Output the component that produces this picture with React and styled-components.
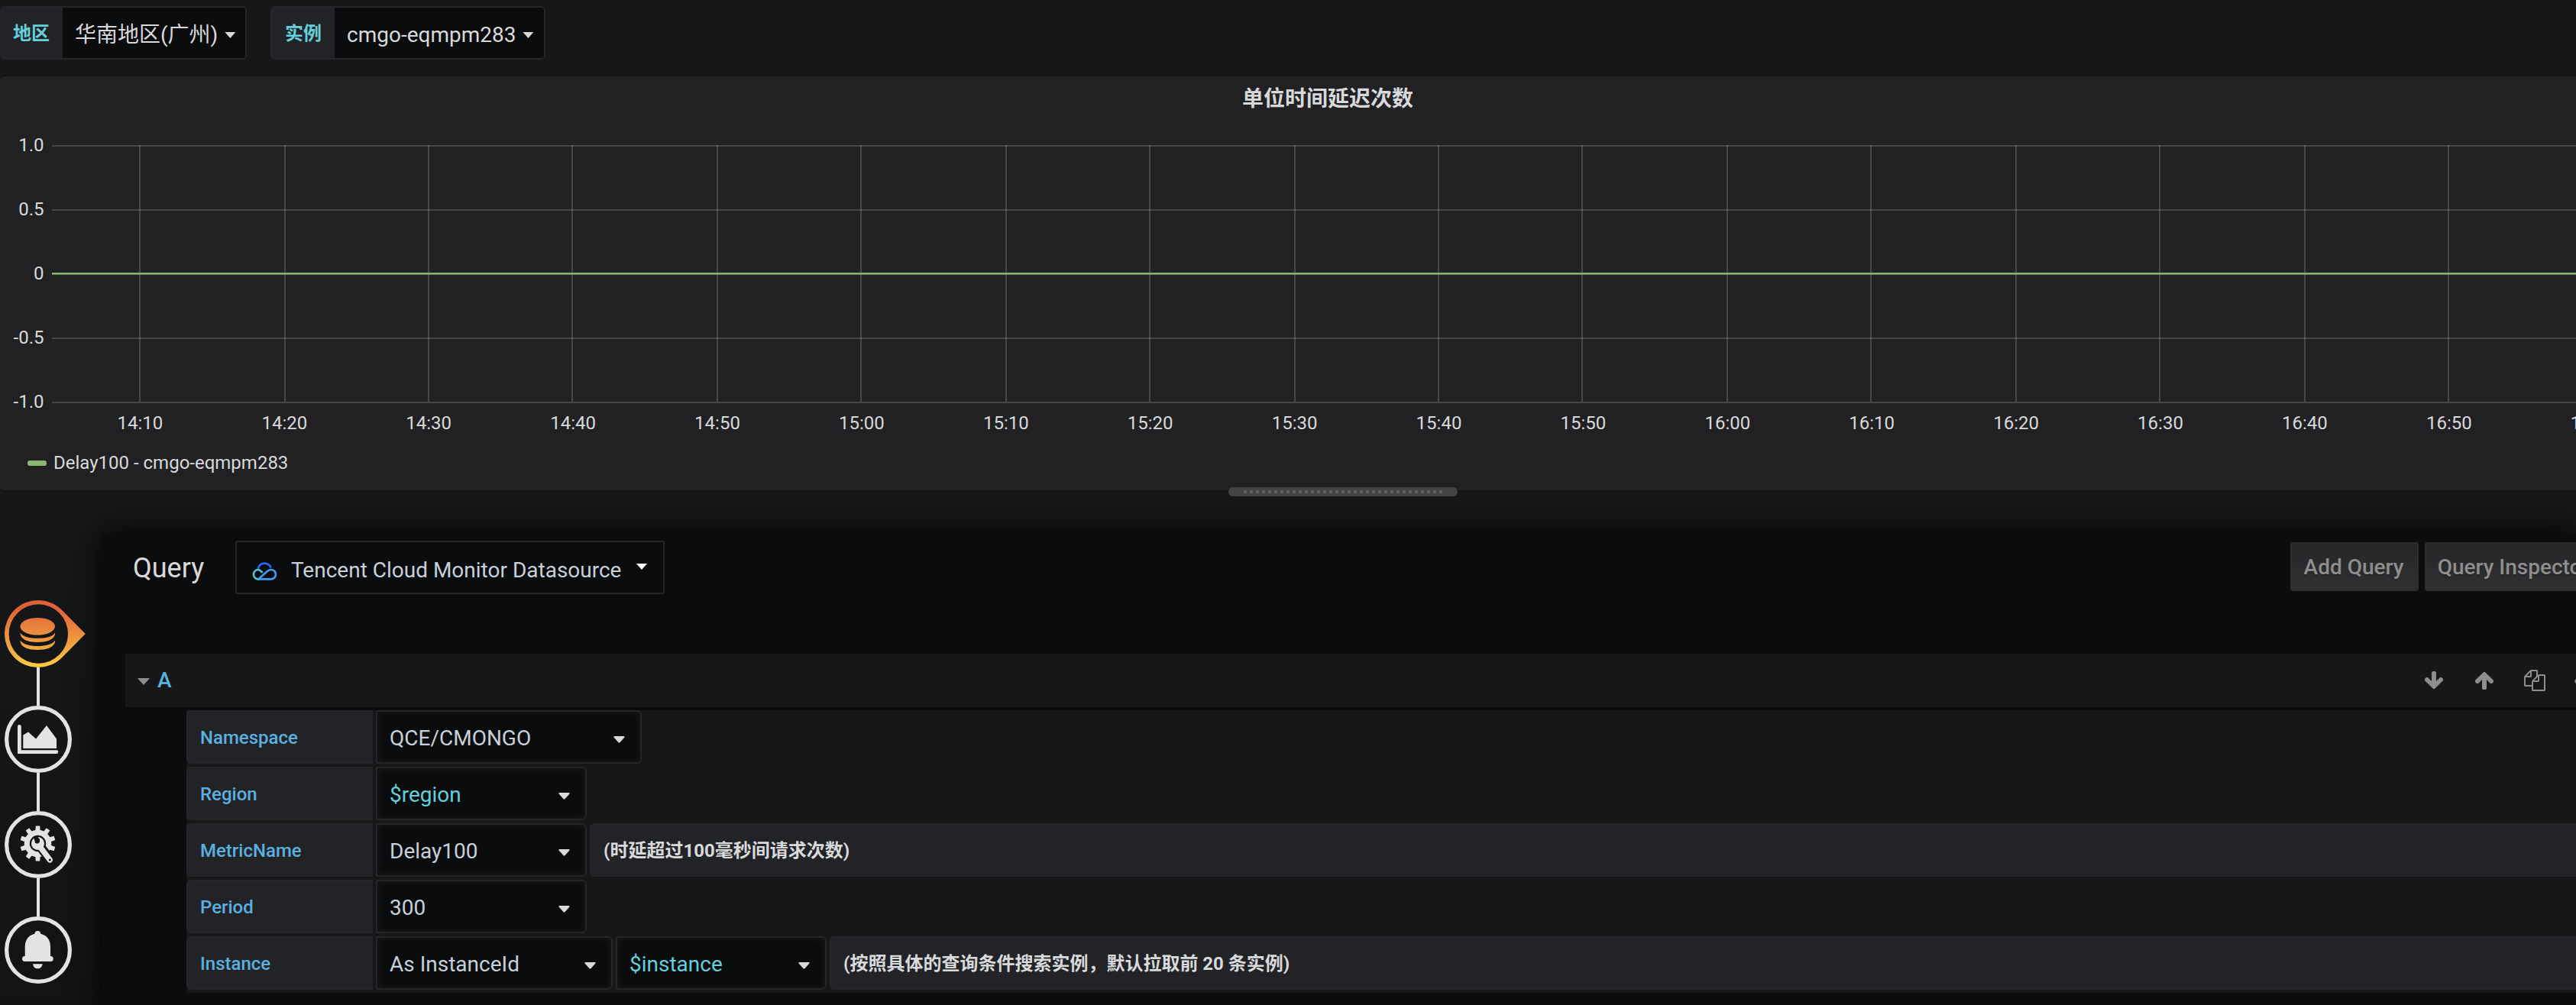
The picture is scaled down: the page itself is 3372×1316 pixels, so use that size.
import React from "react";
import styled, { createGlobalStyle, css } from "styled-components";

const c = {
  page: "#161719",
  panel: "#212124",
  dark: "#0b0c0e",
  label: "#222327",
  border: "#262628",
  text: "#d8d9da",
  input: "#c7d0d9",
  blue: "#5ab1e0",
  variable: "#65cfdb",
  muted: "#8e8e8e",
  white: "#e3e3e3",
};

const GlobalStyle = createGlobalStyle`
  *, *::before, *::after { box-sizing: border-box; }
  html, body { margin: 0; background: ${c.page}; overflow: hidden; }
  body {
    color: ${c.text};
    font-family: Roboto, "Noto Sans CJK SC", sans-serif;
    font-size: 28px;
    line-height: 1.2;
  }
`;

const Page = styled.div`
  display: flex;
  flex-direction: column;
  width: 3372px;
  height: 1316px;
  overflow: hidden;
  background: linear-gradient(180deg, ${c.page} 0, ${c.page} 650px, #121315 1316px);
`;

/* ---------- template variables ---------- */

const SubMenu = styled.nav`
  display: flex;
  gap: 31px;
  height: 98px;
  flex: none;
  padding-top: 8px;
`;

const Variable = styled.div`
  display: flex;
  width: ${(p) => p.$width}px;
  height: 70px;
  border: 2px solid ${c.border};
  border-left-width: ${(p) => (p.$flush ? 0 : 2)}px;
  border-radius: 6px;
  overflow: hidden;
`;

const VariableLabel = styled.span`
  display: flex;
  align-items: center;
  width: ${(p) => p.$width}px;
  padding: 2px 0 0 17px;
  background: ${c.label};
  color: ${c.variable};
  font-size: 24px;
  font-weight: 700;
  line-height: 28px;
  white-space: nowrap;
`;

const VariableValue = styled.span`
  display: flex;
  flex: 1;
  align-items: center;
  gap: 9px;
  padding: 6px 0 0 16px;
  background: ${c.dark};
  font-size: 28px;
  line-height: 34px;
  white-space: nowrap;
`;

const Triangle = styled.i`
  flex: none;
  width: 14px;
  height: 8px;
  background: ${(p) => p.$color || c.text};
  clip-path: polygon(0 0, 100% 0, 50% 100%);
  ${(p) => p.$raised && css`margin-bottom: ${p.$raised}px;`}
`;

/* ---------- graph panel ---------- */

const GraphPanel = styled.section`
  display: flex;
  flex-direction: column;
  flex: none;
  width: 3478px;
  height: 546px;
  border: 2px solid #141414;
  border-left: 0;
  border-radius: 6px;
  background: ${c.panel};
`;

const PanelTitle = styled.h2`
  margin: 0;
  height: 56px;
  flex: none;
  padding-top: 2px;
  font-size: 28px;
  font-weight: 700;
  line-height: 56px;
  text-align: center;
`;

const Plot = styled.svg`
  display: block;
  flex: none;
  width: 3478px;
  height: 426px;
  text {
    font-family: Roboto, sans-serif;
    font-size: 24px;
    fill: ${c.text};
  }
`;

const Legend = styled.div`
  display: flex;
  align-items: center;
  gap: 9px;
  padding-left: 36px;
  height: 48px;
  font-size: 24px;
  line-height: 28px;
`;

const SeriesDash = styled.span`
  width: 25px;
  height: 7px;
  border-radius: 3px;
  margin-top: 1px;
  background: #8ab573;
`;

const ResizeBar = styled.div`
  display: flex;
  justify-content: center;
  flex: none;
  width: 3516px;
  height: 54px;
`;

const ResizeHandle = styled.div`
  position: relative;
  top: -6px;
  width: 300px;
  height: 12px;
  padding: 4px 20px;
  border-radius: 6px;
  background: #424345;
`;

const HandleDots = styled.div`
  height: 4px;
  background: repeating-linear-gradient(90deg, #5b5c5e 0 4px, transparent 4px 8px);
`;

/* ---------- editor ---------- */

const Editor = styled.main`
  display: flex;
  flex: 1;
  min-height: 0;
`;

const TabRail = styled.aside`
  display: flex;
  flex-direction: column;
  flex: none;
  position: relative;
  z-index: 1;
  width: 134px;
  padding: 88px 0 0 6px;
`;

const TabIcon = styled.svg`
  display: block;
  flex: none;
  width: 110px;
  height: 88px;
`;

const Connector = styled.span`
  flex: none;
  width: 4px;
  height: 50px;
  margin-left: 42px;
  background: ${c.white};
`;

const QueryPane = styled.section`
  flex: 1;
  min-width: 0;
  height: 640px;
  border-radius: 6px 0 0 0;
  background: ${c.dark};
  box-shadow: 0 0 40px #000;
`;

const QueryHeader = styled.header`
  display: flex;
  align-items: flex-start;
  height: 158px;
  padding: 10px 0 0 40px;
`;

const Heading = styled.h3`
  margin: 0;
  width: 134px;
  padding-top: 1px;
  font-size: 36px;
  font-weight: 400;
  line-height: 70px;
`;

const DatasourcePicker = styled.div`
  display: flex;
  align-items: center;
  width: 562px;
  height: 70px;
  padding-left: 20px;
  border: 2px solid ${c.border};
  border-radius: 3px;
  color: ${c.input};
  white-space: nowrap;
  svg { flex: none; margin-top: 10px; }
`;

const DatasourceName = styled.span`
  flex: none;
  width: 471px;
  padding: 7px 0 0 19px;
  line-height: 34px;
`;

const HeaderActions = styled.div`
  display: flex;
  gap: 8px;
  width: 374px;
  margin: 2px 0 0 auto;
  overflow: hidden;
`;

const ActionButton = styled.button`
  flex: none;
  width: ${(p) => p.$width}px;
  height: 64px;
  padding: 2px 2px 0 0;
  border: 2px solid #2e2e30;
  border-radius: 4px;
  background: linear-gradient(180deg, #262628, #303032);
  color: ${c.muted};
  font: 500 28px/56px Roboto, sans-serif;
  text-shadow: 0 2px 0 rgba(0, 0, 0, 0.2);
  white-space: nowrap;
`;

const QueryRowHeader = styled.div`
  display: flex;
  align-items: center;
  justify-content: space-between;
  height: 70px;
  margin: 0 0 4px 30px;
  padding-left: 16px;
  background: ${c.page};
`;

const RowTitle = styled.div`
  display: flex;
  align-items: center;
  gap: 10px;
  color: ${c.blue};
  font-weight: 500;
`;

const RowCaret = styled.i`
  width: 16px;
  height: 9px;
  margin-top: 3px;
  background: ${c.muted};
  clip-path: polygon(0 0, 100% 0, 50% 100%);
`;

const RowActions = styled.div`
  display: flex;
  gap: 38px;
  width: 200px;
  overflow: hidden;
`;

const ActionGlyph = styled.svg`
  flex: none;
  width: 28px;
  height: 28px;
  fill: ${c.muted};
`;

const QueryForm = styled.div`
  display: flex;
  flex-direction: column;
  gap: 4px;
  height: 370px;
  margin-left: 110px;
  background: ${c.page};
`;

const FormRow = styled.div`
  display: flex;
  gap: 4px;
  height: 70px;
`;

const FieldLabel = styled.label`
  display: flex;
  align-items: center;
  flex: none;
  width: 244px;
  padding: 3px 0 0 16px;
  border: 2px solid #252628;
  border-right: 0;
  border-radius: 6px 0 0 6px;
  background: ${c.label};
  color: ${c.blue};
  font-size: 24px;
  font-weight: 500;
`;

const Select = styled.div`
  display: flex;
  align-items: center;
  justify-content: space-between;
  flex: none;
  width: ${(p) => p.$width}px;
  padding: 0 20px 0 16px;
  border: 2px solid ${c.border};
  border-radius: 2px 6px 6px 2px;
  background: ${c.dark};
  box-shadow: inset 2px 2px 8px rgba(22, 23, 25, 0.9), inset -2px -2px 8px rgba(22, 23, 25, 0.9);
  color: ${(p) => (p.$variable ? c.variable : c.input)};
  line-height: 34px;
`;

const SelectText = styled.span`
  padding-top: 3px;
`;

const SelectCaret = styled.svg`
  width: 15px;
  height: 9px;
  margin-top: 6px;
  fill: ${c.text};
`;

const Hint = styled.div`
  display: flex;
  align-items: center;
  flex: 1;
  padding: 2px 0 0 16px;
  border: 2px solid #252628;
  border-right: 0;
  border-radius: 6px 0 0 6px;
  background: ${c.label};
  font-size: 24px;
  font-weight: 700;
  line-height: 28px;
  white-space: nowrap;
`;

/* ---------- drawings ---------- */

const TIMES = [
  "14:10", "14:20", "14:30", "14:40", "14:50", "15:00", "15:10", "15:20", "15:30",
  "15:40", "15:50", "16:00", "16:10", "16:20", "16:30", "16:40", "16:50", "17:00",
];
const LEVELS = [["1.0", 35], ["0.5", 119], ["0", 203], ["-0.5", 287], ["-1.0", 371]];
const timeX = (i) => 183 + 2 * Math.round((i * 188.875) / 2 + 0.1);

function Graph() {
  return (
    <Plot viewBox="0 0 3478 426">
      <g fill="rgba(200,200,200,0.23)">
        {LEVELS.map(([name, y]) => (
          <rect key={name} x="68" y={y - 1} width="3400" height="2" />
        ))}
        {TIMES.map((t, i) => (
          <rect key={t} x={timeX(i) - 1} y="34" width="2" height="336" />
        ))}
      </g>
      <rect x="68" y="201" width="3400" height="2.4" fill="#8ab573" />
      {LEVELS.map(([name, y]) => (
        <text key={name} x="57.500" y={y + 7} textAnchor="end">{name}</text>
      ))}
      {TIMES.map((t, i) => (
        <text key={t} x={183.4 + i * 188.9} y="406" textAnchor="middle">{t}</text>
      ))}
    </Plot>
  );
}

function CloudLogo() {
  return (
    <svg width="32" height="24" viewBox="0 0 32 24" fill="none" strokeWidth="2.7">
      <path d="M8 8.6C9.2 4.2 12.4 1.7 16 1.7c4 0 7.3 2.4 8.5 5.8" stroke="#2468f2" />
      <path d="M13.6 13.9C11.5 11.400 9.600 10 7.400 10A6.200 6.200 0 0 0 7.400 22.300H10" stroke="#4fc3d0" />
      <path d="M8.400 22.300 19.600 12.300C21.400 10.700 23 10 24.800 10a6.150 6.150 0 0 1 0 12.300H8.400" stroke="#3f9cf5" />
    </svg>
  );
}

function DatabaseTab() {
  return (
    <TabIcon viewBox="6 786 110 88">
      <defs>
        <linearGradient id="flame" gradientUnits="userSpaceOnUse" x1="0" y1="796" x2="0" y2="874">
          <stop offset="0" stopColor="#e0603a" />
          <stop offset="1" stopColor="#fbcb45" />
        </linearGradient>
      </defs>
      <g fill="url(#flame)">
        <path
          fillRule="evenodd"
          d="M81.200 799A44 44 0 1 0 81.200 861L111.800 830ZM50.300 791.300a38.700 38.700 0 1 1 0 77.400a38.700 38.700 0 1 1 0-77.400Z"
        />
        <ellipse cx="49.200" cy="820.300" rx="22.800" ry="11.300" />
        <path d="M26.700 828.500C30 834 39 835.800 49.200 835.800S69 834 72 828.500V831C70 838 60 841 49.200 841S28 838 26.700 831Z" />
        <path d="M26.700 838.500C30 844 39 846 49.200 846S69 844 72 838.500V841C70 848 60 851 49.200 851S28 848 26.700 841Z" />
      </g>
    </TabIcon>
  );
}

const Ring = () => <circle cx="44" cy="44" r="41.400" fill="none" stroke={c.white} strokeWidth="5.200" />;

function ChartTab() {
  return (
    <TabIcon viewBox="0 0 110 88" fill={c.white}>
      <Ring />
      <path d="M17 27.500a2.400 2.400 0 0 1 4.800 0V58.300H68a2.300 2.300 0 0 1 0 4.600H17Z" />
      <path d="M24.300 38.500 31 34.600 41 43.500 55 26 68 43.500V56H24.300Z" />
    </TabIcon>
  );
}

function GearTab() {
  const teeth = Array.from({ length: 10 }, (_, i) => i * 36);
  return (
    <TabIcon viewBox="0 0 110 88" fill={c.white}>
      <defs>
        <mask id="gearCut" maskUnits="userSpaceOnUse" x="0" y="0" width="110" height="88">
          <rect width="110" height="88" fill="#fff" />
          <circle cx="43.500" cy="42.500" r="10.700" fill="#000" />
          <path d="M43.500 42.500 60 64" stroke="#000" strokeWidth="12.500" />
        </mask>
        <mask id="wrenchCut" maskUnits="userSpaceOnUse" x="0" y="0" width="110" height="88">
          <rect width="110" height="88" fill="#fff" />
          <path d="M36 29 39.300 38.500 40 42 43.500 42.800 46 40.500 46 37 43 33.500 41 29Z" fill="#000" />
          <circle cx="59.300" cy="64" r="1.500" fill="#000" />
        </mask>
      </defs>
      <Ring />
      <g mask="url(#gearCut)">
        <circle cx="43.500" cy="42.500" r="17.800" />
        {teeth.map((a) => (
          <path key={a} d="M40.300 27 40.800 19.400H46.200L46.700 27Z" transform={`rotate(${a} 43.500 42.500)`} />
        ))}
      </g>
      <g mask="url(#wrenchCut)">
        <circle cx="43.500" cy="42.500" r="8.500" />
        <path d="M45 45 59.300 64" stroke={c.white} strokeWidth="7.200" strokeLinecap="round" />
      </g>
    </TabIcon>
  );
}

function BellTab() {
  return (
    <TabIcon viewBox="0 0 110 88" fill={c.white}>
      <Ring />
      <circle cx="43.300" cy="22.800" r="3.900" />
      <path d="M26.700 53V40C26.700 29 33 22.500 43.300 22.500S60 29 60 40V53Z" />
      <rect x="23" y="52" width="40.700" height="7" rx="3.500" />
      <path d="M37 62.200H49.700C49.200 66 46.700 68.300 43.300 68.300S37.400 66 37 62.200Z" />
    </TabIcon>
  );
}

const GLYPHS = {
  down: "M1675 832q0 53-37 90l-651 652q-39 37-91 37-53 0-90-37l-651-652q-38-36-38-90 0-53 38-91l74-75q39-37 91-37 53 0 90 37l294 294v-704q0-52 38-90t90-38h128q52 0 90 38t38 90v704l294-294q37-37 90-37 52 0 91 37l75 75q37 39 37 91z",
  files: "M1696 384q40 0 68 28t28 68v1216q0 40-28 68t-68 28h-960q-40 0-68-28t-28-68v-288h-544q-40 0-68-28t-28-68v-672q0-40 20-88t48-76l408-408q28-28 76-48t88-20h416q40 0 68 28t28 68v328q68-40 128-40h416zm-544 213l-299 299h299v-299zm-640-384l-299 299h299v-299zm196 647l316-316v-416h-384v416q0 40-28 68t-68 28h-416v640h512v-256q0-40 20-88t48-76zm956 804v-1152h-384v416q0 40-28 68t-68 28h-416v640h896z",
  eye: "M0 960C200 560 520 340 896 340s696 220 896 620c-200 400-520 620-896 620S200 1360 0 960Z",
};

const Glyph = ({ name, flip }) => (
  <ActionGlyph viewBox="0 0 1792 1792">
    <path d={GLYPHS[name]} transform={flip ? "rotate(180 896 896)" : undefined} />
  </ActionGlyph>
);

function Dropdown({ width, variable, children }) {
  return (
    <Select $width={width} $variable={variable}>
      <SelectText>{children}</SelectText>
      <SelectCaret viewBox="0 0 15 9">
        <path d="M1.300 0H13.700Q15.200 .3 14.200 1.700L8.700 7.900Q7.500 9 6.300 7.900L.8 1.700Q-.2 .3 1.300 0Z" />
      </SelectCaret>
    </Select>
  );
}

const FIELDS = [
  { label: "Namespace", selects: [{ width: 348, text: "QCE/CMONGO" }] },
  { label: "Region", selects: [{ width: 276, text: "$region", variable: true }] },
  { label: "MetricName", selects: [{ width: 276, text: "Delay100" }], hint: "(时延超过100毫秒间请求次数)" },
  { label: "Period", selects: [{ width: 276, text: "300" }] },
  {
    label: "Instance",
    selects: [
      { width: 310, text: "As InstanceId" },
      { width: 276, text: "$instance", variable: true },
    ],
    hint: "(按照具体的查询条件搜索实例，默认拉取前 20 条实例)",
  },
];

export default function App() {
  return (
    <>
      <GlobalStyle />
      <Page>
        <SubMenu>
          <Variable $width={323} $flush>
            <VariableLabel $width={82}>地区</VariableLabel>
            <VariableValue>华南地区(广州)<Triangle /></VariableValue>
          </Variable>
          <Variable $width={360}>
            <VariableLabel $width={82}>实例</VariableLabel>
            <VariableValue>cmgo-eqmpm283<Triangle /></VariableValue>
          </Variable>
        </SubMenu>

        <GraphPanel>
          <PanelTitle>单位时间延迟次数</PanelTitle>
          <Graph />
          <Legend><SeriesDash />Delay100 - cmgo-eqmpm283</Legend>
        </GraphPanel>
        <ResizeBar>
          <ResizeHandle><HandleDots /></ResizeHandle>
        </ResizeBar>

        <Editor>
          <TabRail>
            <DatabaseTab />
            <Connector />
            <ChartTab />
            <Connector />
            <GearTab />
            <Connector />
            <BellTab />
          </TabRail>

          <QueryPane>
            <QueryHeader>
              <Heading>Query</Heading>
              <DatasourcePicker>
                <CloudLogo />
                <DatasourceName>Tencent Cloud Monitor Datasource</DatasourceName>
                <Triangle $color="#fff" $raised={2} />
              </DatasourcePicker>
              <HeaderActions>
                <ActionButton $width={168}>Add Query</ActionButton>
                <ActionButton $width={234}>Query Inspector</ActionButton>
              </HeaderActions>
            </QueryHeader>

            <QueryRowHeader>
              <RowTitle><RowCaret />A</RowTitle>
              <RowActions>
                <Glyph name="down" />
                <Glyph name="down" flip />
                <Glyph name="files" />
                <Glyph name="eye" />
              </RowActions>
            </QueryRowHeader>

            <QueryForm>
              {FIELDS.map((f) => (
                <FormRow key={f.label}>
                  <FieldLabel>{f.label}</FieldLabel>
                  {f.selects.map((s) => (
                    <Dropdown key={s.text} width={s.width} variable={s.variable}>{s.text}</Dropdown>
                  ))}
                  {f.hint && <Hint>{f.hint}</Hint>}
                </FormRow>
              ))}
            </QueryForm>
          </QueryPane>
        </Editor>
      </Page>
    </>
  );
}
